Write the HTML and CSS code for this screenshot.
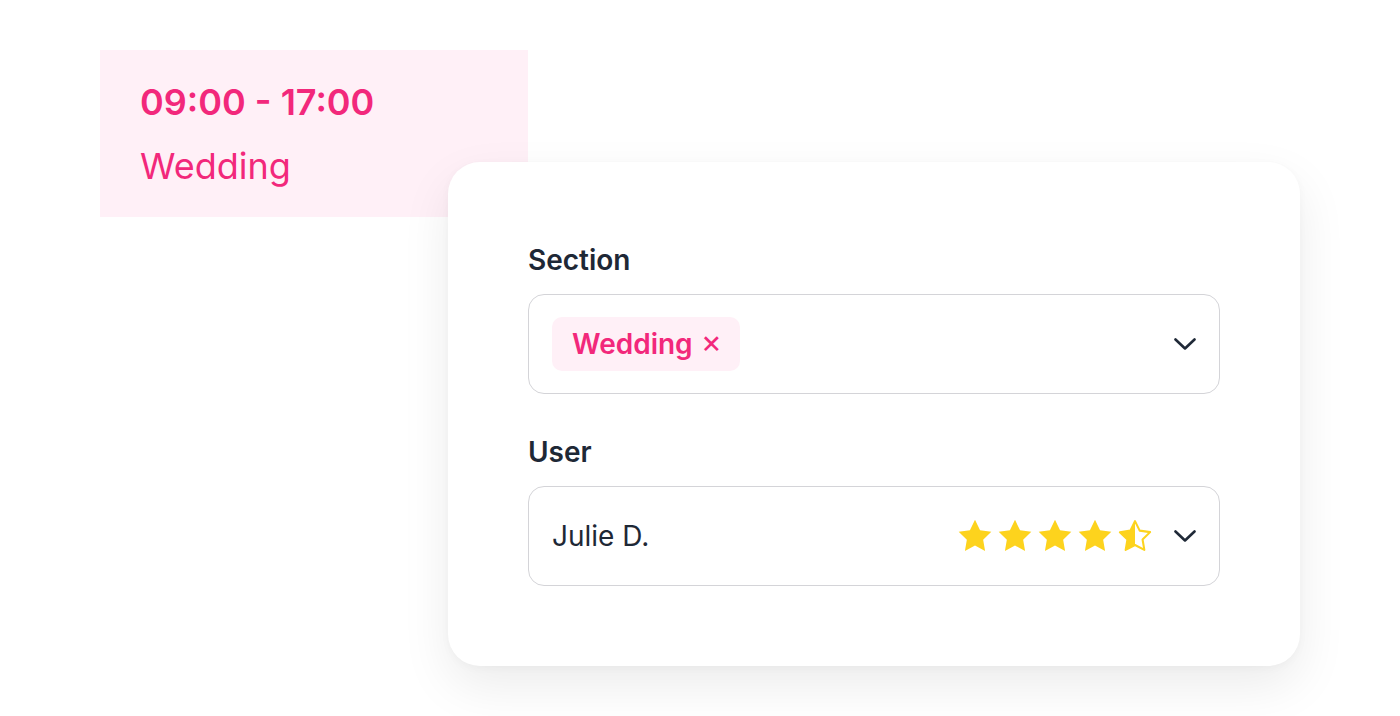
FILE: index.html
```html
<!DOCTYPE html>
<html>
<head>
<meta charset="utf-8">
<link rel="stylesheet" href="styles.css">
</head>
<body>
<div class="stage">
  <div class="event">
    <div class="event-time">09:00 - 17:00</div>
    <div class="event-name">Wedding</div>
  </div>
  <div class="card">
    <div class="field">
      <div class="label">Section</div>
      <div class="select">
        <span class="tag">Wedding <span class="tag-x">×</span></span>
        <svg class="chev" viewBox="0 0 22 12" width="22" height="12"><path d="M1.5 1.5 L11 10.5 L20.5 1.5" fill="none" stroke="#1f2937" stroke-width="2.6" stroke-linecap="round" stroke-linejoin="round"/></svg>
      </div>
    </div>
    <div class="field">
      <div class="label">User</div>
      <div class="select">
        <span class="user">Julie D.</span>
        <span class="stars">
          <svg viewBox="0 0 24 24" width="38" height="38"><path class="star" d="M12 1.8l3.2 6.5 7.1 1-5.15 5 1.22 7.1L12 18.05 5.63 21.4l1.22-7.1-5.15-5 7.1-1z"/></svg>
          <svg viewBox="0 0 24 24" width="38" height="38"><path class="star" d="M12 1.8l3.2 6.5 7.1 1-5.15 5 1.22 7.1L12 18.05 5.63 21.4l1.22-7.1-5.15-5 7.1-1z"/></svg>
          <svg viewBox="0 0 24 24" width="38" height="38"><path class="star" d="M12 1.8l3.2 6.5 7.1 1-5.15 5 1.22 7.1L12 18.05 5.63 21.4l1.22-7.1-5.15-5 7.1-1z"/></svg>
          <svg viewBox="0 0 24 24" width="38" height="38"><path class="star" d="M12 1.8l3.2 6.5 7.1 1-5.15 5 1.22 7.1L12 18.05 5.63 21.4l1.22-7.1-5.15-5 7.1-1z"/></svg>
          <svg viewBox="0 0 24 24" width="38" height="38">
            <defs><linearGradient id="half" x1="0" x2="1" y1="0" y2="0"><stop offset="0.5" stop-color="#fdd31d"/><stop offset="0.5" stop-color="#ffffff"/></linearGradient></defs>
            <path d="M12 2.6l2.95 6 6.6 0.96-4.78 4.65 1.13 6.58L12 17.7 6.1 20.8l1.13-6.58-4.78-4.65 6.6-0.96z" fill="url(#half)" stroke="#fdd31d" stroke-width="1.3" stroke-linejoin="round"/>
          </svg>
        </span>
        <svg class="chev" viewBox="0 0 22 12" width="22" height="12"><path d="M1.5 1.5 L11 10.5 L20.5 1.5" fill="none" stroke="#1f2937" stroke-width="2.6" stroke-linecap="round" stroke-linejoin="round"/></svg>
      </div>
    </div>
  </div>
</div>
</body>
</html>
```

FILE: styles.css
```css
html, body {
  margin: 0;
  padding: 0;
  background: #ffffff;
}
body {
  font-family: Inter, "Noto Sans", "Liberation Sans", sans-serif;
  width: 1400px;
  height: 716px;
  overflow: hidden;
}
.stage {
  padding-top: 50px;
}
.event {
  margin-left: 100px;
  width: 428px;
  height: 167px;
  box-sizing: border-box;
  background: #fff0f7;
  padding: 30px 0 0 40px;
  color: #f2287b;
}
.event-time {
  font-size: 36px;
  font-weight: 600;
  line-height: 44px;
}
.event-name {
  margin-top: 20px;
  font-size: 36px;
  font-weight: 400;
  line-height: 44px;
}
.card {
  position: relative;
  z-index: 1;
  margin-left: 448px;
  margin-top: -55px;
  width: 852px;
  height: 504px;
  box-sizing: border-box;
  background: #ffffff;
  border-radius: 32px;
  box-shadow: 0 20px 50px rgba(0, 0, 0, 0.08), 0 2px 10px rgba(0, 0, 0, 0.03);
  padding: 78px 80px 0 80px;
  display: flex;
  flex-direction: column;
  gap: 38px;
}
.label {
  font-size: 28px;
  font-weight: 600;
  color: #1e2836;
  line-height: 40px;
  margin-bottom: 14px;
}
.select {
  height: 100px;
  box-sizing: border-box;
  border: 1px solid #d4d4d8;
  border-radius: 16px;
  display: flex;
  align-items: center;
  padding: 0 23px 0 23px;
}
.tag {
  background: #fff0f7;
  color: #f2287b;
  border-radius: 10px;
  height: 54px;
  display: flex;
  align-items: center;
  padding: 0 18px 0 20px;
  font-size: 28px;
  font-weight: 600;
  gap: 8px;
}
.tag-x {
  font-size: 32px;
  font-weight: 400;
  line-height: 1;
  margin-top: -4px;
}
.chev {
  margin-left: auto;
  display: block;
}
.user {
  font-size: 28px;
  font-weight: 400;
  color: #1e2836;
}
.stars {
  margin-left: auto;
  margin-right: 20px;
  display: flex;
  gap: 2px;
  align-items: center;
}
.stars svg {
  display: block;
}
.star {
  fill: #fdd31d;
}
.stars + .chev {
  margin-left: 0;
}
```
